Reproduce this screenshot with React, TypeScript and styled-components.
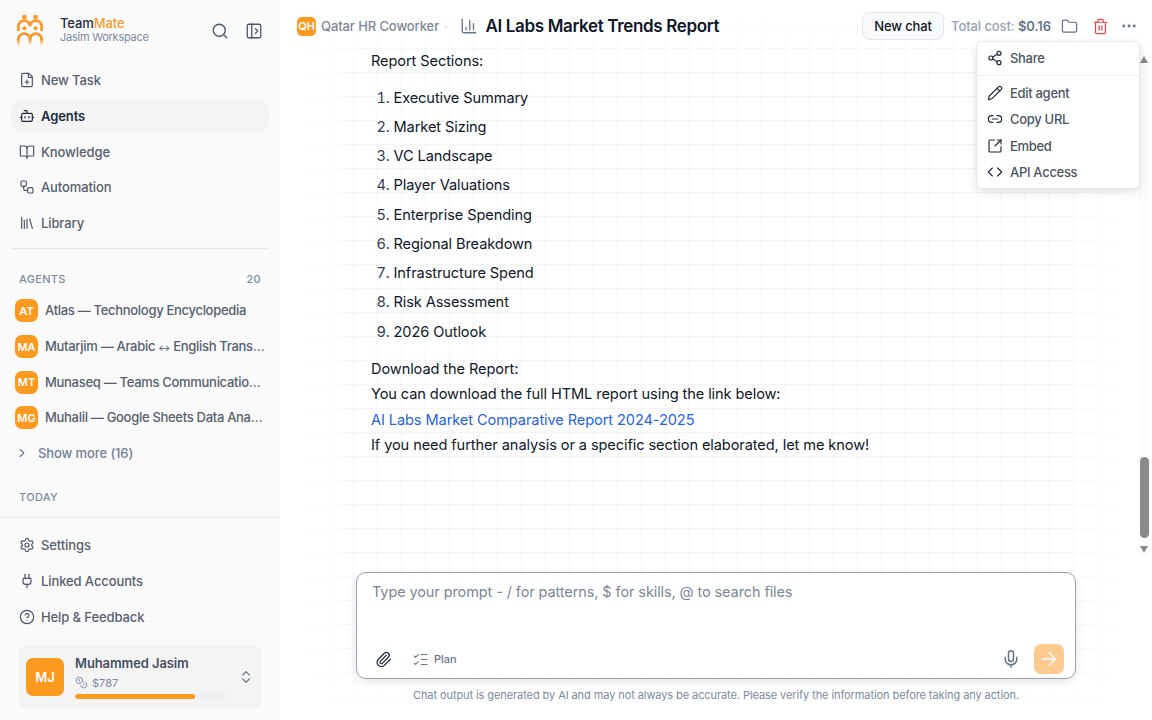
import React from "react";
import styled, { createGlobalStyle } from "styled-components";
import {
  FilePlus, Bot, BookOpen, Workflow, Library, Search, PanelLeftOpen, Settings, Plug, CircleHelp,
  Coins, ChevronsUpDown, ChevronRight, ChartColumn, Folder, Trash2, Ellipsis, Share2, Pencil, Link2,
  SquareArrowOutUpRight, Code, Paperclip, ListChecks, Mic, ArrowRight,
} from "lucide-react";

const Global = createGlobalStyle`
  html, body { margin: 0; padding: 0; height: 100%; overflow: hidden; background: #fff; }
  body { font-family: Inter, "Liberation Sans", sans-serif; color: #0f172a; }
  * { box-sizing: border-box; }
`;

const Shell = styled.div`display: flex; width: 1152px; height: 720px; overflow: hidden;`;

const Sidebar = styled.aside`
  width: 280px; flex: none; height: 720px; background: #fafafa; display: flex; flex-direction: column;
`;
const Brand = styled.div`display: flex; align-items: center; height: 62px; padding: 0 17px;`;
const BrandText = styled.div`margin-left: 17px; flex: 1; display: flex; flex-direction: column; margin-top: -2px;`;
const BrandName = styled.div`font-size: 13px; font-weight: 500; line-height: 15px; letter-spacing: -0.1px; color: #1e293b; span { color: #fb9a2b; }`;
const BrandSub = styled.div`font-size: 11px; line-height: 13px; color: #7c8ba1; letter-spacing: -0.25px;`;
const BrandIcons = styled.div`display: flex; align-items: center; gap: 16px; color: #475569;`;

const Nav = styled.nav`display: flex; flex-direction: column; padding: 0 11px; margin-top: 1px;`;
const NavItem = styled.div<{ $active?: boolean }>`
  height: 34px; margin-bottom: 1.8px; display: flex; align-items: center; gap: 6px; padding-left: 8px;
  border-radius: 12px; font-size: 13px; font-weight: ${(p) => (p.$active ? 600 : 500)};
  letter-spacing: -0.1px;
  color: ${(p) => (p.$active ? "#1e293b" : "#56606f")};
  background: ${(p) => (p.$active ? "#f4f4f5" : "transparent")};
  svg { color: ${(p) => (p.$active ? "#1e293b" : "#475569")}; flex: none; }
`;
const Rule = styled.div`height: 1px; background: #e9ebee; margin: 6px 11px 0;`;
const SectionHead = styled.div`
  display: flex; justify-content: space-between; padding: 0 19px; margin-top: 23px; height: 15px; align-items: center;
  font-size: 11px; font-weight: 500; color: #7c8ba1; letter-spacing: 0.3px;
`;
const AgentList = styled.div`display: flex; flex-direction: column; margin-top: 6px;`;
const AgentRow = styled.div`
  height: 35.7px; display: flex; align-items: center; gap: 7px; padding: 0 15px;
`;
const Badge = styled.div<{ $size: number; $font: number; $radius: number }>`
  width: ${(p) => p.$size}px; height: ${(p) => p.$size}px; border-radius: ${(p) => p.$radius}px; background: #fb9a1f;
  color: #fff; font-size: ${(p) => p.$font}px; font-weight: 600; display: flex; align-items: center; justify-content: center; flex: none;
`;
const AgentName = styled.div`
  font-size: 13px; font-weight: 500; color: #56606f; white-space: nowrap; overflow: hidden; text-overflow: ellipsis;
  flex: 1; min-width: 0; letter-spacing: -0.3px; margin-top: -1px;
`;
const NarrowArrow = styled.span`font-size: 9px;`;
const ShowMore = styled.div`
  display: flex; align-items: center; gap: 9px; padding-left: 15px; height: 34px; font-size: 13px; font-weight: 500;
  color: #718096; letter-spacing: -0.1px;
  svg { color: #64748b; }
`;
const TodayHead = styled(SectionHead)`margin-top: 20px;`;
const Spacer = styled.div`flex: 1;`;
const FootRule = styled.div`height: 1px; background: #e9ebee;`;
const FootNav = styled(Nav)`margin-top: 10px;`;
const UserCard = styled.div`
  margin: 9.6px 19px 11px; height: 64px; flex: none; border-radius: 8px; background: #f4f4f5; display: flex; align-items: center;
  padding: 0 7px;
`;
const UserInfo = styled.div`margin-left: 11px; flex: 1; display: flex; flex-direction: column; width: 150px;`;
const UserName = styled.div`font-size: 13px; font-weight: 600; color: #475063; line-height: 16px; letter-spacing: -0.1px; margin-top: -1px;`;
const UserCost = styled.div`
  display: flex; align-items: center; gap: 4px; font-size: 11px; color: #7c8ba1; margin-top: 5px; line-height: 14px;
`;
const Track = styled.div`height: 5px; width: 153px; border-radius: 3px; background: #eef2f6; margin-top: 4px; overflow: hidden;`;
const Fill = styled.div`height: 5px; border-radius: 3px; background: #fb9a1f;`;
const ChevronBox = styled.div`color: #64748b; display: flex; margin-right: 0;`;

const Main = styled.main`
  flex: 1; min-width: 0; height: 720px; position: relative; display: flex; flex-direction: column;
  background-color: #fff;
  background-image:
    linear-gradient(to right, #fff 20px, rgba(255,255,255,0) 80px, rgba(255,255,255,0) 780px, #fff 850px),
    linear-gradient(to bottom, #fff 10px, rgba(255,255,255,0) 60px, rgba(255,255,255,0) 650px, #fff 710px),
    linear-gradient(to right, #f4f5f7 1px, transparent 1px),
    linear-gradient(to bottom, #f4f5f7 1px, transparent 1px);
  background-size: 100% 100%, 100% 100%, 24px 24px, 24px 24px;
  background-position: 0 0, 0 0, 1px 0, 0 0;
`;
const Header = styled.header`
  height: 52px; flex: none; display: flex; align-items: center; padding: 0 14px 0 17px;
`;
const SmallMuted = styled.span`font-size: 13px; font-weight: 500; color: #7b8797; margin-left: 5px; letter-spacing: -0.1px;`;
const Dot = styled.span`color: #b8c0cc; font-size: 12px; margin: 0 0 0 5px;`;
const ChartWrap = styled.span`display: flex; color: #64748b; margin-left: 12px;`;
const Title = styled.h1`
  margin: 0 0 0 8px; font-size: 17px; font-weight: 600; color: #0f172a; letter-spacing: -0.35px; white-space: nowrap; flex: 1;
`;
const NewChat = styled.button`
  height: 28px; width: 82px; border-radius: 8px; border: 1px solid #e2e8f0; background: #f8fafc; color: #0f172a;
  font-family: inherit; font-size: 13px; font-weight: 500; padding: 0; letter-spacing: -0.15px;
`;
const Cost = styled.div`
  margin-left: 7px; font-size: 13px; color: #94a3b3; font-weight: 500; letter-spacing: -0.1px; white-space: nowrap;
  b { color: #64748b; font-weight: 600; }
`;
const HeadIcon = styled.span<{ $color: string; $gap: number }>`display: flex; color: ${(p) => p.$color}; margin-left: ${(p) => p.$gap}px;`;

const Menu = styled.div`
  position: absolute; left: 696px; top: 41px; width: 164px; height: 148px; background: #fff; border: 1px solid #e5e9ef;
  border-radius: 6px; box-shadow: 0 3px 8px rgba(15,23,42,.12); z-index: 3; display: flex; flex-direction: column;
`;
const MenuItem = styled.div`
  display: flex; align-items: center; gap: 7px; height: 26.3px; padding-left: 10px; font-size: 13px; font-weight: 500; color: #4b5563;
  letter-spacing: -0.3px;
  svg { color: #1e293b; flex: none; }
`;
const MenuTop = styled(MenuItem)`height: 32px;`;
const MenuRule = styled.div`height: 1px; background: #eef0f3; margin: 1px 0 4px;`;

const Body = styled.div`flex: 1; min-height: 0; display: flex;`;
const Content = styled.div`flex: 1; min-width: 0; padding-left: 91px; font-size: 14.6px; line-height: 25.5px; color: #0f172a; letter-spacing: -0.1px;`;
const Para = styled.div`margin-top: -3px;`;
const List = styled.ol`margin: 9px 0 10px; padding: 0 0 0 22.5px; li { height: 29.25px; line-height: 29.25px; } li::marker { color: #334155; }`;
const Anchor = styled.a`color: #2563eb; text-decoration: none;`;
const Scroll = styled.div`width: 12px; margin: 0 2px 0 0; height: 504px; display: flex; flex-direction: column; align-items: center; background: rgba(250,250,250,.6);`;
const ArrowUp = styled.div`margin-top: 4px; width: 0; height: 0; border-left: 4.5px solid transparent; border-right: 4.5px solid transparent; border-bottom: 7px solid #8a8a8a;`;
const ArrowDown = styled.div`margin-top: 8px; width: 0; height: 0; border-left: 4.5px solid transparent; border-right: 4.5px solid transparent; border-top: 7px solid #8a8a8a;`;
const Thumb = styled.div`width: 9px; height: 81px; border-radius: 5px; background: #8a8a8a; margin-top: 394px;`;

const Composer = styled.div`
  flex: none; width: 720px; height: 107px; margin: 0 0 0 76px; border: 1px solid #9aa3b5; border-radius: 10px; background: #fff;
  box-shadow: 0 3px 8px rgba(15,23,42,.1); display: flex; flex-direction: column; padding: 10px 11px 3px 15px;
`;
const Prompt = styled.div`flex: 1; font-size: 14.5px; color: #7b8797; line-height: 18px; letter-spacing: -0.1px;`;
const ComposerBar = styled.div`display: flex; align-items: center; height: 32px;`;
const ClipWrap = styled.span`display: flex; color: #1e293b; margin-left: 3px;`;
const PlanWrap = styled.span`display: flex; align-items: center; gap: 5px; margin-left: 20px; color: #64748b; font-size: 11px; font-weight: 500; flex: 1;`;
const MicWrap = styled.span`display: flex; color: #64748b; margin-right: 13px;`;
const Send = styled.div`width: 30px; height: 30px; border-radius: 7px; background: #fdcb8f; color: #fff; display: flex; align-items: center; justify-content: center;`;
const Disclaimer = styled.div`
  flex: none; height: 41px; text-align: center; font-size: 11px; color: #7b8ba1; padding-top: 9px; width: 872px; line-height: 15px; letter-spacing: -0.085px;
`;

const Logo = () => (
  <svg width="26" height="34" viewBox="0 0 28 36" fill="none" style={{ flex: "none" }}>
    <defs>
      <linearGradient id="lg" x1="0" y1="0" x2="0" y2="1">
        <stop offset="0.5" stopColor="#fb9a2b" />
        <stop offset="1" stopColor="#fb9a2b" stopOpacity="0.05" />
      </linearGradient>
    </defs>
    <circle cx="8" cy="3" r="2.6" fill="#fb9a2b" />
    <circle cx="20" cy="3" r="2.6" fill="#fb9a2b" />
    <path d="M1.5 18v-5a6.25 6.25 0 0 1 12.5 0 6.25 6.25 0 0 1 12.5 0v5" stroke="#fb9a2b" strokeWidth="3" />
    <circle cx="8" cy="15" r="2.2" fill="#fb9a2b" />
    <circle cx="20" cy="15" r="2.2" fill="#fb9a2b" />
    <path d="M1.5 34v-7a6.25 6.25 0 0 1 12.5 0 6.25 6.25 0 0 1 12.5 0v7M14 27v7" stroke="url(#lg)" strokeWidth="3" />
  </svg>
);

const agents: [string, React.ReactNode][] = [
  ["AT", "Atlas — Technology Encyclopedia"],
  ["MA", <>Mutarjim — Arabic <NarrowArrow>↔</NarrowArrow> English Translator Agent</>],
  ["MT", "Munaseq — Teams Communication Assistant"],
  ["MG", "Muhalil — Google Sheets Data Analyst Agent"],
];
const sections = ["Executive Summary", "Market Sizing", "VC Landscape", "Player Valuations", "Enterprise Spending", "Regional Breakdown", "Infrastructure Spend", "Risk Assessment", "2026 Outlook"];

export default function App() {
  return (
    <Shell>
      <Global />
      <Sidebar>
        <Brand>
          <Logo />
          <BrandText>
            <BrandName>Team<span>Mate</span></BrandName>
            <BrandSub>Jasim Workspace</BrandSub>
          </BrandText>
          <BrandIcons>
            <Search size={18} strokeWidth={1.75} />
            <PanelLeftOpen size={18} strokeWidth={1.75} />
          </BrandIcons>
        </Brand>
        <Nav>
          <NavItem><FilePlus size={16} strokeWidth={1.75} />New Task</NavItem>
          <NavItem $active><Bot size={16} strokeWidth={1.75} />Agents</NavItem>
          <NavItem><BookOpen size={16} strokeWidth={1.75} />Knowledge</NavItem>
          <NavItem><Workflow size={16} strokeWidth={1.75} />Automation</NavItem>
          <NavItem><Library size={16} strokeWidth={1.75} />Library</NavItem>
        </Nav>
        <Rule />
        <SectionHead><span>AGENTS</span><span>20</span></SectionHead>
        <AgentList>
          {agents.map(([a, n]) => (
            <AgentRow key={a}>
              <Badge $size={23} $font={11} $radius={7}>{a}</Badge>
              <AgentName>{n}</AgentName>
            </AgentRow>
          ))}
        </AgentList>
        <ShowMore><ChevronRight size={14} />Show more (16)</ShowMore>
        <TodayHead><span>TODAY</span></TodayHead>
        <Spacer />
        <FootRule />
        <FootNav>
          <NavItem><Settings size={16} strokeWidth={1.75} />Settings</NavItem>
          <NavItem><Plug size={16} strokeWidth={1.75} />Linked Accounts</NavItem>
          <NavItem><CircleHelp size={16} strokeWidth={1.75} />Help &amp; Feedback</NavItem>
        </FootNav>
        <UserCard>
          <Badge $size={38} $font={13} $radius={7}>MJ</Badge>
          <UserInfo>
            <UserName>Muhammed Jasim</UserName>
            <UserCost><Coins size={13} strokeWidth={1.75} />$787</UserCost>
            <Track><Fill style={{ width: `${(120 / 153) * 100}%` }} /></Track>
          </UserInfo>
          <ChevronBox><ChevronsUpDown size={16} strokeWidth={1.75} /></ChevronBox>
        </UserCard>
      </Sidebar>
      <Main>
        <Header>
          <Badge $size={19} $font={11} $radius={5}>QH</Badge>
          <SmallMuted>Qatar HR Coworker</SmallMuted>
          <Dot>·</Dot>
          <ChartWrap><ChartColumn size={18} strokeWidth={1.75} /></ChartWrap>
          <Title>AI Labs Market Trends Report</Title>
          <NewChat>New chat</NewChat>
          <Cost>Total cost: <b>$0.16</b></Cost>
          <HeadIcon $color="#64748b" $gap={10}><Folder size={17} strokeWidth={1.75} /></HeadIcon>
          <HeadIcon $color="#ef4444" $gap={13.5}><Trash2 size={17} strokeWidth={1.75} /></HeadIcon>
          <HeadIcon $color="#64748b" $gap={11.5}><Ellipsis size={18} strokeWidth={1.75} /></HeadIcon>
        </Header>
        <Menu>
          <MenuTop><Share2 size={16} strokeWidth={1.75} />Share</MenuTop>
          <MenuRule />
          <MenuItem><Pencil size={16} strokeWidth={1.75} />Edit agent</MenuItem>
          <MenuItem><Link2 size={16} strokeWidth={1.75} />Copy URL</MenuItem>
          <MenuItem><SquareArrowOutUpRight size={16} strokeWidth={1.75} />Embed</MenuItem>
          <MenuItem><Code size={16} strokeWidth={1.75} />API Access</MenuItem>
        </Menu>
        <Body>
          <Content>
            <Para>Report Sections:</Para>
            <List>{sections.map((s) => <li key={s}>{s}</li>)}</List>
            <div>Download the Report:</div>
            <div>You can download the full HTML report using the link below:</div>
            <div><Anchor>AI Labs Market Comparative Report 2024-2025</Anchor></div>
            <div>If you need further analysis or a specific section elaborated, let me know!</div>
          </Content>
          <Scroll>
            <ArrowUp />
            <Thumb />
            <ArrowDown />
          </Scroll>
        </Body>
        <Composer>
          <Prompt>Type your prompt - / for patterns, $ for skills, @ to search files</Prompt>
          <ComposerBar>
            <ClipWrap><Paperclip size={17} strokeWidth={1.75} /></ClipWrap>
            <PlanWrap><ListChecks size={17} strokeWidth={1.5} />Plan</PlanWrap>
            <MicWrap><Mic size={20} strokeWidth={1.75} /></MicWrap>
            <Send><ArrowRight size={22} strokeWidth={1.5} /></Send>
          </ComposerBar>
        </Composer>
        <Disclaimer>Chat output is generated by AI and may not always be accurate. Please verify the information before taking any action.</Disclaimer>
      </Main>
    </Shell>
  );
}
